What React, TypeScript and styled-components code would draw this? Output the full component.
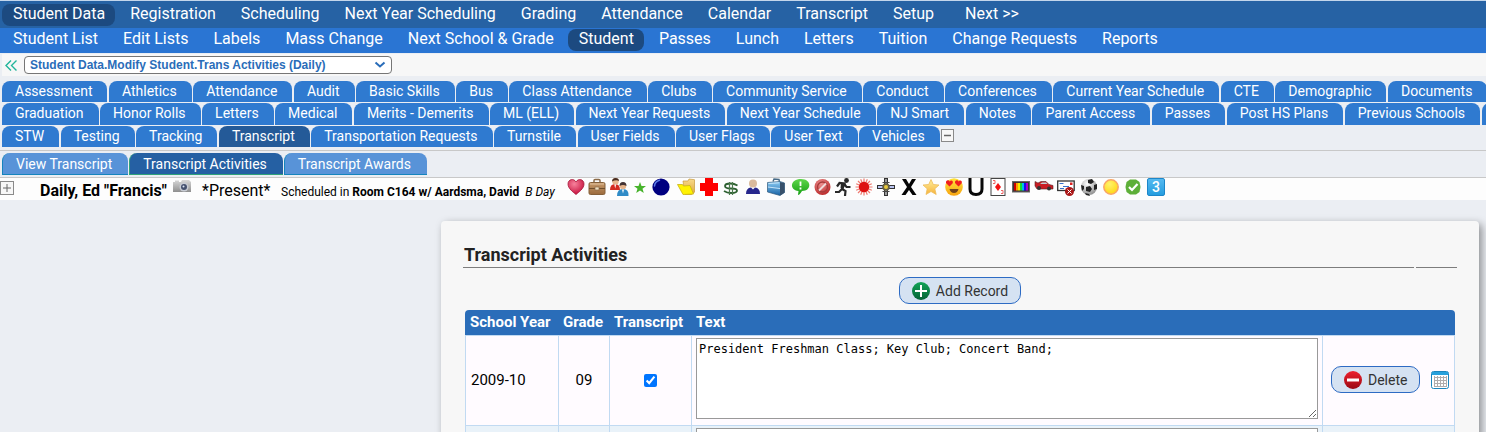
import React from "react";
import styled, { createGlobalStyle } from "styled-components";

const GlobalStyle = createGlobalStyle`
  * { box-sizing: border-box; }
  html { overflow: hidden; }
  body {
    margin: 0;
    background: #ebeef3;
    color: #000;
    font-family: Roboto, "Liberation Sans", sans-serif;
    font-size: 15px;
  }
  svg { display: block; }
`;

const Bar = styled.nav<{ $level: "main" | "sub" }>`
  display: flex;
  align-items: flex-start;
  gap: 4px;
  padding: ${(p) => (p.$level === "main" ? "3px 2px 2px" : "1px 2px 2px")};
  background: ${(p) => (p.$level === "main" ? "#2662a4" : "#2a75d3")};
  border-top: ${(p) => (p.$level === "main" ? "1px solid #c3d6ec" : "0")};
`;

const BarLink = styled.a<{ $active?: boolean; $pager?: boolean }>`
  height: 22px;
  margin-left: ${(p) => (p.$pager ? 6 : 0)}px;
  padding: 0 10px 0 11px;
  border-radius: 8px;
  background: ${(p) => (p.$active ? "#1c4a80" : "transparent")};
  color: #fff;
  font-size: 16px;
  line-height: 20px;
  text-decoration: none;
  white-space: nowrap;
`;

const Crumbs = styled.div`
  display: flex;
  align-items: center;
  gap: 7px;
  height: 22px;
  margin: 1px 0 5px 2px;
  padding-left: 3px;
  background: #f7f7f7;
`;

const CollapseButton = styled.button`
  padding: 0;
  border: 0;
  background: none;
`;

const SelectWrap = styled.div`
  display: grid;
  align-items: center;
  width: 368px;
  & > * { grid-area: 1 / 1; }
  & > svg { justify-self: end; margin-right: 6px; pointer-events: none; }
`;

const PathSelect = styled.select`
  appearance: none;
  height: 18px;
  padding: 0 5px;
  border: 1px solid #767676;
  border-radius: 4px;
  background: #fff;
  color: #2a6db9;
  font: bold 12px/14px "Liberation Sans", Arial, sans-serif;
`;

const TabRow = styled.nav<{ $height: number }>`
  height: ${(p) => p.$height}px;
  margin-bottom: 1px;
  padding-left: 2px;
  overflow: hidden;
  font-size: 14px;
  line-height: 20px;
  white-space: nowrap;
`;

const Tab = styled.a<{ $active?: boolean }>`
  display: inline-block;
  height: 22px;
  margin-right: -2px;
  padding: 0 15px 0 13px;
  border-radius: 8px 8px 0 0;
  background: ${(p) => (p.$active ? "#245a98" : "#2f7ad0")};
  color: #fff;
  text-decoration: none;
  vertical-align: top;
`;

const ToggleBox = styled.button<{ $size: number }>`
  width: ${(p) => p.$size}px;
  height: ${(p) => p.$size}px;
  margin: 3px 0 0;
  padding: 0;
  border: 0;
  background: none;
  vertical-align: top;
`;

const SubTabs = styled.nav`
  display: flex;
  gap: 1px;
  margin-top: 3px;
  padding: 2px 2px;
  border-top: 1px solid #c8c8c8;
  border-bottom: 1px solid #c8c8c8;
`;

const SubTab = styled.a<{ $active?: boolean }>`
  height: 22px;
  padding: 0 16px 0 13px;
  border: 1px solid ${(p) => (p.$active ? "#2fa37a" : "#1484bd")};
  border-width: 0 0 1px 1px;
  border-radius: 8px 8px 0 0;
  background: ${(p) => (p.$active ? "#2560a3" : "#5893d8")};
  color: #fff;
  font-size: 14px;
  line-height: 22px;
  text-decoration: none;
  white-space: nowrap;
`;

const StudentRow = styled.div`
  display: flex;
  align-items: flex-start;
  height: 22px;
  background: #fdfdfd;
  white-space: nowrap;
`;

const StudentName = styled.strong`
  width: 133px;
  margin-left: 26px;
  font-size: 16px;
  font-weight: 700;
  line-height: 26px;
`;

const Presence = styled.span`
  width: 79px;
  margin-left: 11px;
  font-size: 16px;
  line-height: 26px;
`;

const Schedule = styled.span`
  width: 286px;
  font-size: 12px;
  line-height: 28px;
`;

const IconStrip = styled.div`
  display: flex;
  gap: 4px;
`;

const Card = styled.main`
  margin: 21px 7px 0 441px;
  padding: 22px 22px 40px;
  border-radius: 4px;
  background: #f7f7f7;
  box-shadow: 3px 3px 8px rgba(0, 0, 0, 0.4);
`;

const Heading = styled.div`
  display: flex;
  gap: 2px;
  height: 25px;
`;

const Title = styled.h1`
  flex: 1;
  margin: 0;
  padding-left: 1px;
  border-bottom: 1px solid #7d7d7d;
  color: #222;
  font-size: 18px;
  font-weight: 700;
  line-height: 23px;
`;

const HeadingEnd = styled.div`
  width: 41px;
  border-bottom: 1px solid #7d7d7d;
`;

const Actions = styled.div`
  display: flex;
  justify-content: center;
  padding: 9px 0 6px;
`;

const PillButton = styled.button`
  display: inline-flex;
  align-items: center;
  gap: 6px;
  height: 27px;
  padding: 0 12px;
  border: 1px solid #2d6bc4;
  border-radius: 10px;
  background: #d5e2f2;
  color: #333;
  font: 14px/20px Roboto, sans-serif;
`;

const Records = styled.table`
  width: calc(100% - 4px);
  margin-left: 2px;
  border-collapse: separate;
  border-spacing: 0;
  table-layout: fixed;
`;

const HeadCell = styled.th<{ $w?: number }>`
  width: ${(p) => (p.$w ? p.$w + "px" : "auto")};
  height: 25px;
  padding: 0 4px 2px;
  background: #2a6db9;
  color: #fff;
  font-size: 15px;
  font-weight: 700;
  text-align: left;
  white-space: nowrap;
  &:first-child { padding-left: 5px; border-top-left-radius: 4px; }
  &:last-child { border-top-right-radius: 4px; }
`;

const Row = styled.tr<{ $alt?: boolean }>`
  background: ${(p) => (p.$alt ? "#e9f2f9" : "#fffbff")};
`;

const Cell = styled.td<{ $center?: boolean }>`
  height: 90px;
  padding: 2px 4px 4px;
  border-top: 1px solid #c1daf2;
  border-right: 1px solid #c1daf2;
  text-align: ${(p) => (p.$center ? "center" : "left")};
  &:first-child { padding-left: 5px; border-left: 1px solid #c1daf2; }
`;

const NotesCell = styled(Cell)`
  vertical-align: top;
`;

const Check = styled.input`
  width: 13px;
  height: 13px;
  margin: 0;
  vertical-align: middle;
  accent-color: #0075ff;
`;

const Notes = styled.textarea`
  display: block;
  width: 100%;
  height: 81px;
  padding: 1px 2px;
  border: 1px solid #999;
  background: #fff;
  color: #000;
  font: 12px/18px "DejaVu Sans Mono", monospace;
  resize: vertical;
`;

const RowActions = styled.div`
  display: flex;
  align-items: center;
  gap: 11px;
  padding-left: 4px;
`;

const IconButton = styled.button`
  padding: 0;
  border: 0;
  background: none;
`;

const mainNav = ["Student Data", "Registration", "Scheduling", "Next Year Scheduling", "Grading", "Attendance", "Calendar", "Transcript", "Setup", "Next >>"];
const subNav = ["Student List", "Edit Lists", "Labels", "Mass Change", "Next School & Grade", "Student", "Passes", "Lunch", "Letters", "Tuition", "Change Requests", "Reports"];
const tabRows = [
  ["Assessment", "Athletics", "Attendance", "Audit", "Basic Skills", "Bus", "Class Attendance", "Clubs", "Community Service", "Conduct", "Conferences", "Current Year Schedule", "CTE", "Demographic", "Documents"],
  ["Graduation", "Honor Rolls", "Letters", "Medical", "Merits - Demerits", "ML (ELL)", "Next Year Requests", "Next Year Schedule", "NJ Smart", "Notes", "Parent Access", "Passes", "Post HS Plans", "Previous Schools", "Schedule"],
  ["STW", "Testing", "Tracking", "Transcript", "Transportation Requests", "Turnstile", "User Fields", "User Flags", "User Text", "Vehicles"],
];
const subTabs = ["View Transcript", "Transcript Activities", "Transcript Awards"];

type IconDef = { name: string; w: number; art: React.ReactNode };

const grad = (id: string, from: string, to: string) => (
  <linearGradient id={id} x1="0" y1="0" x2="0" y2="1">
    <stop offset="0" stopColor={from} />
    <stop offset="1" stopColor={to} />
  </linearGradient>
);

const radial = (id: string, from: string, to: string) => (
  <radialGradient id={id} cx="0.4" cy="0.3" r="0.75">
    <stop offset="0" stopColor={from} />
    <stop offset="1" stopColor={to} />
  </radialGradient>
);

const statusIcons: IconDef[] = [
  { name: "Heart", w: 17, art: <>{radial("heart", "#f7829c", "#c40a38")}<path d="M9 16.500C6 14 1 10.500 1 6 1 1 7 0 9 4c2-4 8-3 8 2 0 4.500-5 8-8 10.500z" fill="url(#heart)" stroke="#a5183a" strokeWidth=".8" /></> },
  { name: "Briefcase", w: 18, art: <>{grad("case", "#c89b6c", "#9b6a3c")}<path d="M6 5V2.500Q6 1.500 7 1.500h4q1 0 1 1V5" fill="none" stroke="#8a6a48" strokeWidth="1.500" /><rect x="1" y="4.500" width="16" height="12" rx="1.500" fill="url(#case)" stroke="#85603a" /><path d="M1 10.500h6m4 0h6" stroke="#6f4e2c" /><path d="M2 6h14" stroke="#e0c09c" /><rect x="7" y="9" width="4" height="3" fill="#f0dfc2" stroke="#8a6a48" strokeWidth=".7" /></> },
  { name: "People", w: 17, art: <><path d="M0 12q0-6 5-6t5 6z" fill="#d32a20" /><circle cx="5.500" cy="3.500" r="3.200" fill="#e7b58c" /><path d="M2 3.500Q2 0 5.500 0T9 3Q6 1.500 2 3.500z" fill="#4a2d20" /><path d="M4.300 6.500l.9 4 .9-4z" fill="#fff" /><path d="M7 18q0-7 6-7t5.500 7z" fill="#2f8bc7" /><circle cx="13" cy="8" r="3.200" fill="#e7b58c" /><path d="M9.500 8q0-4 3.500-4t3.500 4q-3.500-2-7 0z" fill="#433" /><path d="M12 11.500l1 4 1-4z" fill="#fff" /></> },
  { name: "Green star", w: 17, art: <path d="M9 4l1.500 4H15l-3.500 2.700 1.300 4.300L9 12.400 5.200 15l1.300-4.300L3 8h4.500z" fill="#47b32b" /> },
  { name: "Blue ball", w: 21, art: <><circle cx="9" cy="9" r="8.600" fill="#000080" /><path d="M2.500 8Q3 3.500 7.500 2.300" fill="none" stroke="#5c7de8" strokeWidth="1.500" strokeLinecap="round" /></> },
  { name: "Folder", w: 19, art: <>{grad("fold", "#f8d98a", "#dfa93c")}<path d="M6 3h5l1-2 5.500.7v12.500l-3 2.300H8z" fill="url(#fold)" stroke="#c79a3c" strokeWidth=".7" /><path d="M.5 6.500h5l1 1.500 6.500-.5 3.500 8.500L6 16.500z" fill="#fff200" stroke="#c9b416" strokeWidth=".8" /></> },
  { name: "Medical", w: 18, art: <path d="M5 0h8v5h5v8h-5v5H5v-5H0V5h5z" fill="#fe0000" /> },
  { name: "Money", w: 18, art: <><path d="M15.500 7.500Q12 5.500 8.500 5.500 3 5.500 3 8t6 2.500 6 2.200-6 2.300q-4 0-7-2" fill="none" stroke="#2d6030" strokeWidth="1.800" /><path d="M7.500 4v13m3-13v13" stroke="#4c7a4e" strokeWidth="1.200" /></> },
  { name: "Person", w: 19, art: <><circle cx="9" cy="5.500" r="4" fill="#d9ba9c" /><path d="M2 16q0-6 5-6.500l2 2 2-2q5 .5 5 6.500z" fill="#26268c" /></> },
  { name: "Suitcase", w: 20, art: <>{grad("suit", "#8ccdf5", "#1762a4")}<path d="M6 3.500l1-2.500 5 .5.500 2.500" fill="none" stroke="#476b87" strokeWidth="1.400" /><path d="M.5 4.500L13 3.500l4.500 1.500v9.500L13 17.500.5 14z" fill="url(#suit)" stroke="#315a7c" strokeWidth=".7" /><path d="M13 4l4.500 1v9.500L13 17.500z" fill="#37506a" /><path d="M1.500 5.500L12 4.800M1 9l12 1.500" stroke="#c7e5fa" /></> },
  { name: "Comment", w: 19, art: <>{grad("bub", "#5ed64b", "#17a014")}<path d="M10 1c11 0 11 12 1 12-2 3-3 4-4 4l.500-4C-2 12-1 1 10 1z" fill="url(#bub)" /><path d="M9.500 3.500v4.500m0 1.500v2" stroke="#fff" strokeWidth="1.800" /></> },
  { name: "Prohibited", w: 16, art: <>{radial("no", "#ee9090", "#b82424")}<circle cx="8.500" cy="9" r="8" fill="url(#no)" /><circle cx="8.500" cy="9" r="5" fill="none" stroke="#a63b3b" strokeWidth="1.300" /><path d="M5 12.500l7-7" stroke="#efdada" strokeWidth="2" /></> },
  { name: "Runner", w: 17, art: <><circle cx="12.500" cy="2.500" r="2.400" fill="#292929" /><path d="M3 8.500l2.500-3.500 5 .5L8 11l3.500 2-.5 5M7.500 11.500L5 14H1M10.500 6l2 3h4" fill="none" stroke="#292929" strokeWidth="2.200" /><path d="M7 5l4.500 1L9 12l-2.500-2z" fill="#292929" /></> },
  { name: "Red sun", w: 18, art: <><path d="M9 .5v17M.5 9h17M3 3l12 12M15 3L3 15M5.700 1.200l6.600 15.600M12.300 1.200L5.700 16.800M1.200 5.700l15.600 6.600M16.800 5.700L1.200 12.300" stroke="#ee7a70" strokeWidth="1.200" /><circle cx="9" cy="9" r="5.200" fill="#dd1212" /></> },
  { name: "Satellite", w: 19, art: <><path d="M9 0v18M0 9h18" stroke="#333" strokeWidth="4" /><path d="M9 1v16" stroke="#999" strokeWidth="2" /><path d="M1 9h16" stroke="#b9c3f0" strokeWidth="2" /><circle cx="9" cy="9" r="3.800" fill="#645f42" /><circle cx="9" cy="9" r="2" fill="#e8c83b" /><path d="M5.500 4.500h7m-7 9h7" stroke="#444" /></> },
  { name: "X mark", w: 18, art: <path d="M2 1h4l3 5 3-5h4l-5 8 5.500 8h-4L9 12l-3.500 5h-4L7 9z" fill="#050505" /> },
  { name: "Gold star", w: 19, art: <>{grad("gold", "#fff09c", "#f7b23a")}<path d="M9 1.500l2.300 5 5.700.500-4.200 3.800 1.400 5.700L9 13.500l-5 3 1.200-5.700L1 7l5.700-.5z" fill="url(#gold)" stroke="#eebc5a" strokeWidth=".8" /></> },
  { name: "Heart eyes", w: 18, art: <>{grad("face", "#ffe43b", "#f7a311")}<circle cx="9" cy="9" r="8.800" fill="url(#face)" /><path d="M4.500 8.500L1 5C.5 1.500 4 1.500 4.600 3.400 6 1.500 9 3 7.500 5.500zM13.500 8.500L10 5C9.500 1.500 13 1.500 13.500 3.400c1.500-1.900 4.500-.4 3 2.100z" fill="#ef1e1e" /><path d="M4.500 11h9q-1 4-4.500 4t-4.500-4z" fill="#70421c" /></> },
  { name: "U mark", w: 18, art: <path d="M3 0v11q0 5.500 6 5.500t6-5.500V0" fill="none" stroke="#080808" strokeWidth="3" /> },
  { name: "Playing card", w: 19, art: <><rect x="2" y=".5" width="14" height="17" fill="#fff" stroke="#444" /><path d="M9 5l3 4-3 4-3-4z" fill="#f31414" /><path d="M4 2.500h2v3H4m8 7h2v3h-2" stroke="#ee6565" fill="none" /></> },
  { name: "Colour bars", w: 19, art: <><rect x=".5" y="3.500" width="17" height="10.500" fill="#3c3235" stroke="#666" /><path d="M3 5v7.500" stroke="#c00" strokeWidth="2" /><path d="M5 5v7.500" stroke="#f90" strokeWidth="2" /><path d="M7 5v7.500" stroke="#ee0" strokeWidth="2" /><path d="M9 5v7.500" stroke="#1d3" strokeWidth="2" /><path d="M11 5v7.500" stroke="#0be" strokeWidth="2" /><path d="M13 5v7.500" stroke="#11e" strokeWidth="2" /><path d="M15 5v7.500" stroke="#a0c" strokeWidth="2" /></> },
  { name: "Car", w: 18, art: <><path d="M0 3.500l3 1.500 3-1.500h5l3 3 4 1v3.500H2L0 8z" fill="#c91d24" stroke="#552222" strokeWidth=".6" /><path d="M5 6l2-1.500h4L12.500 6z" fill="#bcd1d6" /><circle cx="4" cy="10" r="2" fill="#333" /><circle cx="14" cy="10.500" r="2" fill="#333" /></> },
  { name: "Mail stopped", w: 19, art: <><rect x=".7" y="3" width="16.500" height="9.500" fill="#fff" stroke="#333" strokeWidth="1.300" /><path d="M2.500 5.500h4M6 8.500h6M3 10.500h4" stroke="#3673ce" strokeWidth="1.200" /><path d="M13 4.500h2.500V7H13z" fill="#d22" /><circle cx="12.500" cy="13.500" r="4.500" fill="#a91616" /><path d="M10.500 11.500l4 4m0-4l-4 4" stroke="#fff" /></> },
  { name: "Soccer ball", w: 18, art: <>{radial("ball", "#fff", "#8b8b8b")}<circle cx="9" cy="9" r="8" fill="url(#ball)" /><path d="M8 2l4-1 2 3-3 2-3-1zm-2 7l4-1 2 3-2 3-4-1zM1 7l3 1v3l-2 2zm13 0l3-1v5l-3 1zM5 15l4 1 1 2-4-1z" fill="#222" /></> },
  { name: "Yellow sun", w: 18, art: <>{radial("sun", "#fff36b", "#ffd511")}<circle cx="9" cy="9" r="7.200" fill="url(#sun)" stroke="#f9a566" strokeWidth="1.500" /></> },
  { name: "Approved", w: 19, art: <><path d="M6 1.500h6l3.500 2.500 1 5-1 5L12 16.500H6L2.500 14l-1-5 1-5z" fill="#5daf38" /><path d="M5 9l3 3 5.500-6" fill="none" stroke="#fff" strokeWidth="2.200" /></> },
];

const NumberBadge = styled.span`
  width: 18px;
  height: 18px;
  border: 1px solid #1c86c9;
  border-radius: 2px;
  background: linear-gradient(#55b9f0, #259ddf);
  color: #fff;
  font-size: 14px;
  font-weight: 500;
  line-height: 16px;
  text-align: center;
`;

const Glyph = styled.svg`
  flex: none;
  overflow: visible;
`;

const Camera = styled(Glyph)`
  margin-top: 1px;
`;

function BoxIcon({ size, plus }: { size: number; plus?: boolean }) {
  const mid = size / 2;
  return (
    <Glyph width={size} height={size} viewBox={`0 0 ${size} ${size}`} aria-hidden="true">
      <rect x="0.500" y="0.500" width={size - 1} height={size - 1} fill="#f7f7f7" stroke="#8a8a8a" />
      <path d={`M3 ${mid}h${size - 6}${plus ? `M${mid} 3v${size - 6}` : ""}`} stroke="#666" strokeWidth={plus ? 1 : 1.5} />
    </Glyph>
  );
}

function RoundSign({ plus }: { plus?: boolean }) {
  const id = plus ? "signAdd" : "signDel";
  return (
    <Glyph width="18" height="18" viewBox="0 0 18 18" aria-hidden="true">
      {plus ? grad(id, "#12a457", "#056237") : grad(id, "#ee2230", "#9a0812")}
      <circle cx="9" cy="9" r="9" fill={`url(#${id})`} />
      <path d={plus ? "M3 9h12M9 3v12" : "M3 9h12"} stroke="#fff" strokeWidth={plus ? 2 : 3} />
    </Glyph>
  );
}

function CalendarIcon() {
  return (
    <Glyph width="18" height="18" viewBox="0 0 18 18" aria-hidden="true">
      <rect x=".5" y=".5" width="17" height="17" rx="2" fill="#fff" stroke="#1c86bd" />
      <path d="M1 1h16v3H1z" fill="#27a1dc" />
      <path d="M3 6.500h12M3 9.500h12M3 12.500h12M3 15.500h12M3.500 5v11M6.500 5v11M9.500 5v11M12.500 5v11M15.500 5v11" stroke="#b0acac" />
    </Glyph>
  );
}

function Record({ year, grade, text, alt }: { year: string; grade: string; text: string; alt?: boolean }) {
  return (
    <Row $alt={alt}>
      <Cell>{year}</Cell>
      <Cell $center>{grade}</Cell>
      <Cell $center><Check type="checkbox" defaultChecked aria-label={`Show ${year} on transcript`} /></Cell>
      <NotesCell><Notes defaultValue={text} spellCheck={false} aria-label={`Text for ${year}`} /></NotesCell>
      <Cell>
        <RowActions>
          <PillButton type="button"><RoundSign />Delete</PillButton>
          <IconButton type="button" aria-label="Calendar"><CalendarIcon /></IconButton>
        </RowActions>
      </Cell>
    </Row>
  );
}

export default function App() {
  return (
    <>
      <GlobalStyle />
      <Bar $level="main">
        {mainNav.map((t) => <BarLink key={t} href="#" $active={t === "Student Data"} $pager={t === "Next >>"}>{t}</BarLink>)}
      </Bar>
      <Bar $level="sub">
        {subNav.map((t) => <BarLink key={t} href="#" $active={t === "Student"}>{t}</BarLink>)}
      </Bar>
      <Crumbs>
        <CollapseButton type="button" aria-label="Collapse">
          <Glyph width="12" height="11" viewBox="0 0 12 11"><path d="M6 .5l-5 5 5 5M11.500 .5l-5 5 5 5" fill="none" stroke="#22b59b" strokeWidth="1.400" /></Glyph>
        </CollapseButton>
        <SelectWrap>
          <PathSelect aria-label="Page" defaultValue="trans">
            <option value="trans">Student Data.Modify Student.Trans Activities (Daily)</option>
          </PathSelect>
          <Glyph width="12" height="8" viewBox="0 0 12 8"><path d="M1.500 1.500L6 5.500l4.500-4" fill="none" stroke="#2a6db9" strokeWidth="2" /></Glyph>
        </SelectWrap>
      </Crumbs>
      {tabRows.map((row, i) => (
        <TabRow key={i} $height={i === 1 ? 22 : 21}>
          {row.map((t) => (
            <React.Fragment key={t}>
              <Tab href="#" $active={t === "Transcript"}>{t}</Tab>{" "}
            </React.Fragment>
          ))}
          {i === 2 && <ToggleBox type="button" $size={13} aria-label="Show fewer tabs"><BoxIcon size={13} /></ToggleBox>}
        </TabRow>
      ))}
      <SubTabs>
        {subTabs.map((t) => <SubTab key={t} href="#" $active={t === "Transcript Activities"}>{t}</SubTab>)}
      </SubTabs>
      <StudentRow>
        <ToggleBox type="button" $size={14} aria-label="Expand student"><BoxIcon size={14} plus /></ToggleBox>
        <StudentName>Daily, Ed "Francis"</StudentName>
        <Camera width="18" height="16" viewBox="0 0 18 16" aria-label="Photo">
          {grad("cam", "#d8d8d8", "#8f8f8f")}
          <path d="M0 3h2V1.500h4V3h2l1-2h7l2 2v10H0z" fill="url(#cam)" />
          <circle cx="11" cy="8" r="4.500" fill="#c7cbd3" />
          <circle cx="11" cy="8" r="3" fill="#44506e" />
          <circle cx="10.500" cy="7.500" r="1" fill="#dce6f5" />
        </Camera>
        <Presence>*Present*</Presence>
        <Schedule>Scheduled in <b>Room C164 w/ Aardsma, David</b>&nbsp; <i>B Day</i></Schedule>
        <IconStrip>
          {statusIcons.map((s) => (
            <Glyph key={s.name} width={s.w} height="18" viewBox={`0 0 ${s.w} 18`} role="img" aria-label={s.name}>{s.art}</Glyph>
          ))}
          <NumberBadge>3</NumberBadge>
        </IconStrip>
      </StudentRow>
      <Card>
        <Heading><Title>Transcript Activities</Title><HeadingEnd /></Heading>
        <Actions><PillButton type="button"><RoundSign plus />Add Record</PillButton></Actions>
        <Records>
          <thead>
            <tr>
              <HeadCell $w={94}>School Year</HeadCell>
              <HeadCell $w={51}>Grade</HeadCell>
              <HeadCell $w={82}>Transcript</HeadCell>
              <HeadCell>Text</HeadCell>
              <HeadCell $w={132} aria-label="Actions" />
            </tr>
          </thead>
          <tbody>
            <Record year="2009-10" grade="09" text="President Freshman Class; Key Club; Concert Band;" />
            <Record year="2010-11" grade="10" text="" alt />
          </tbody>
        </Records>
      </Card>
    </>
  );
}
